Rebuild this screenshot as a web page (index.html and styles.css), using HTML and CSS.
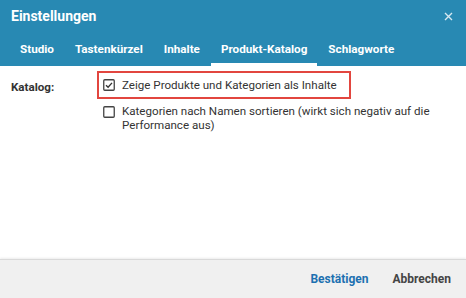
FILE: index.html
```html
<!DOCTYPE html>
<html lang="de">
<head>
    <meta charset="UTF-8">
    <meta name="viewport" content="width=device-width,initial-scale=1.0">
    <title>Einstellungen</title>
    <link rel="stylesheet" href="styles.css">
</head>
<body>
    <div class="dialog">
        <div class="header">
            <div class="titlerow">
                <span class="title">Einstellungen</span>
                <span class="close">
                    <svg width="9" height="9" viewBox="0 0 9 9"><path d="M1 1L8 8M8 1L1 8" stroke="#d6e8f1" stroke-width="1.4" fill="none"/></svg>
                </span>
            </div>
            <div class="tabs">
                <div class="tab">Studio</div>
                <div class="tab">Tastenkürzel</div>
                <div class="tab">Inhalte</div>
                <div class="tab active">Produkt-Katalog</div>
                <div class="tab">Schlagworte</div>
            </div>
        </div>

        <div class="content">
            <div class="label">Katalog:</div>
            <div class="options">
                <div class="option marked">
                    <span class="box">
                        <svg width="12" height="12" viewBox="0 0 12 12"><rect x="0.75" y="0.75" width="10.5" height="10.5" rx="1" fill="#fff" stroke="#444" stroke-width="1.3"/><path d="M3 6.2L5.1 8.2L9 3.9" stroke="#333" stroke-width="1.4" fill="none"/></svg>
                    </span>
                    <span>Zeige Produkte und Kategorien als Inhalte</span>
                </div>
                <div class="option">
                    <span class="box">
                        <svg width="12" height="12" viewBox="0 0 12 12"><rect x="0.75" y="0.75" width="10.5" height="10.5" rx="1" fill="#fff" stroke="#444" stroke-width="1.3"/></svg>
                    </span>
                    <span>Kategorien nach Namen sortieren (wirkt sich negativ auf die Performance aus)</span>
                </div>
            </div>
        </div>

        <div class="footer">
            <button class="btn primary">Bestätigen</button>
            <button class="btn">Abbrechen</button>
        </div>
    </div>
</body>
</html>
```

FILE: styles.css
```css
body{
    margin:0;
    font-family:Roboto,"Liberation Sans",sans-serif;
    background:white;
}

.dialog{
    height:100vh;
    display:flex;
    flex-direction:column;
}

.header{
    background-color:#2889b3;
    color:white;
}

.titlerow{
    height:32px;
    box-sizing:border-box;
    padding:6px 13px 0 11px;
    display:flex;
    justify-content:space-between;
}

.title{
    font-size:14px;
    font-weight:bold;
    line-height:20px;
}

.close{
    padding-top:6px;
    line-height:0;
}

.tabs{
    display:flex;
    padding-left:10px;
    height:34px;
}

.tab{
    box-sizing:border-box;
    height:34px;
    padding:8px 10px 0 10px;
    margin-right:1px;
    line-height:18px;
    font-size:11.7px;
    font-weight:bold;
    border-bottom:3px solid transparent;
}

.tab.active{
    border-bottom-color:white;
}

.content{
    flex:1;
    display:flex;
    padding:5px 0 0 11px;
    color:#333;
    font-size:11.6px;
}

.label{
    width:86px;
    font-weight:bold;
    padding-top:9px;
}

.options{
    flex:1;
    padding-right:8px;
}

.option{
    display:flex;
    align-items:flex-start;
    padding:5px 6px 0 6px;
    line-height:14px;
}

.option.marked{
    border:2px solid #e2463f;
    padding:4px 12px 4px 4px;
    line-height:16px;
    width:fit-content;
}

.box{
    width:12px;
    height:12px;
    margin:2px 7px 0 0;
    flex-shrink:0;
}

.box svg{
    display:block;
}

.footer{
    height:38px;
    background-color:#f0f0f0;
    border-top:1px solid #d9d9d9;
    box-shadow:0 -1px 2px rgba(0,0,0,0.08);
    display:flex;
    justify-content:flex-end;
    align-items:center;
    padding-right:3px;
}

.btn{
    background:none;
    border:none;
    font-family:inherit;
    font-size:12px;
    font-weight:bold;
    color:#444;
    padding:4px 12px;
}

.btn.primary{
    color:#1c70b0;
}
```
